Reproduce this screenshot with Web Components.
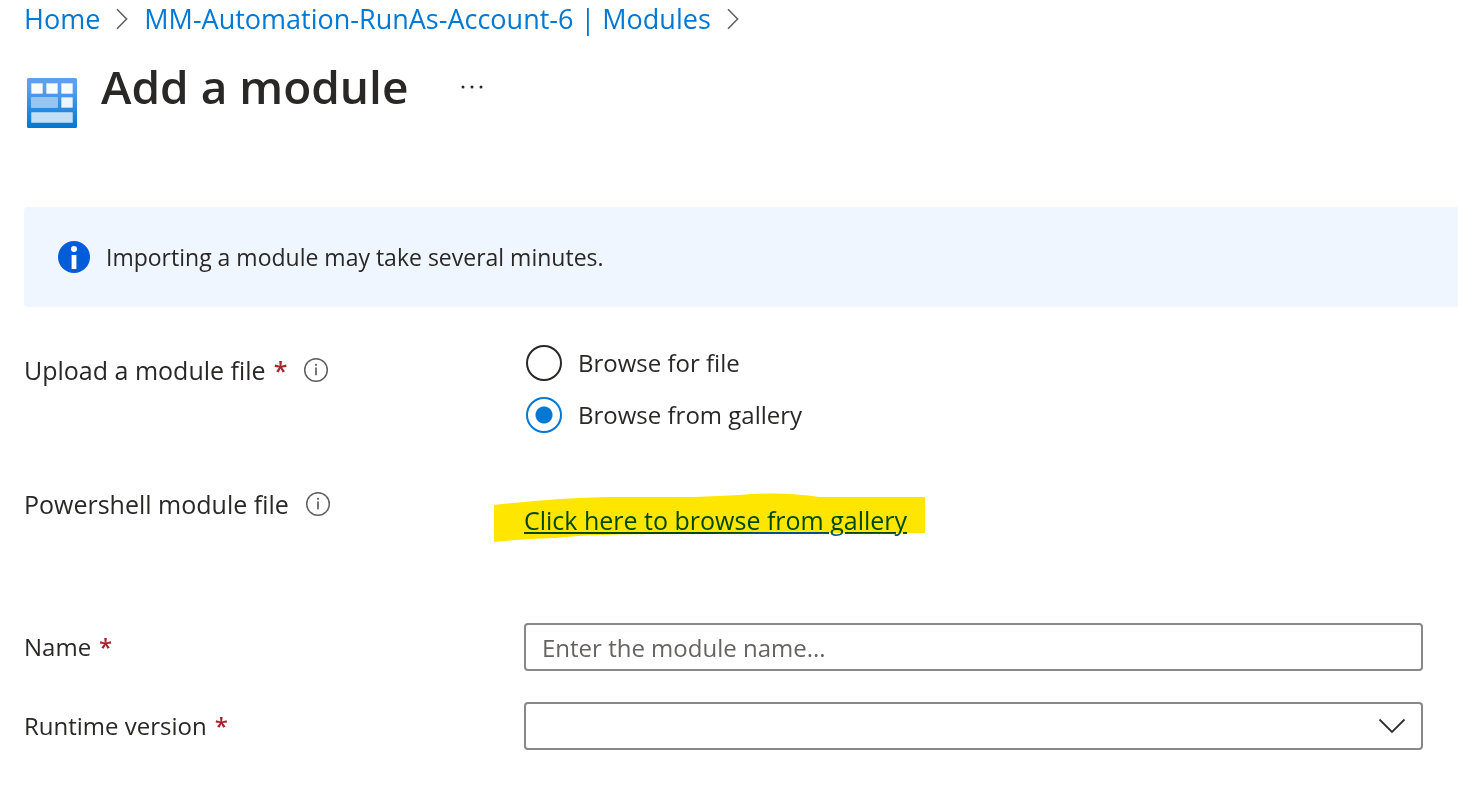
<!DOCTYPE html>
<html lang="en">
<head>
<meta charset="utf-8">
<title>Add a module</title>
<style>
  body {
    margin: 0;
    background: #fff;
    color: #292827;
    font: 25px/36px "Open Sans", "Noto Sans", sans-serif;
  }
</style>
</head>
<body>
<module-page>
  <bread-crumbs slot="nav">
    <crumb-link href="#home">Home</crumb-link>
    <crumb-link href="#modules">MM-Automation-RunAs-Account-6 | Modules</crumb-link>
  </bread-crumbs>
  <page-heading slot="heading">Add a module</page-heading>
  <info-banner slot="banner">Importing a module may take several minutes.</info-banner>
  <radio-field label="Upload a module file" options="Browse for file|Browse from gallery" selected="1"></radio-field>
  <gallery-field label="Powershell module file">Click here to browse from gallery</gallery-field>
  <text-field label="Name" placeholder="Enter the module name..."></text-field>
  <select-field label="Runtime version"></select-field>
</module-page>

<script>
const base = `
  *, *::before, *::after { box-sizing: border-box; }
  :host { display: block; }
  a { color: #0078d4; text-decoration: none; }
  svg { display: block; flex: none; }
`;

const row = `
  .row { display: grid; grid-template-columns: 500px minmax(0, 1fr); }
  .label { display: flex; align-items: center; height: 48px; }
  .req { color: #a4262c; margin-left: 8px; font-weight: 600; }
  .info { margin-left: 16px; padding: 0; border: 0; background: none; }
  input, select { font: inherit; color: inherit; margin: 0; }
`;

const box = `
  :host { font-size: 24px; }
  .box {
    display: block; width: 100%; height: 48px; padding: 0 16px;
    border: 2px solid #8a8886; border-radius: 4px; background: #fff; appearance: none;
  }
`;

const infoButton = `
  <button class="info" type="button" aria-label="More information">
    <svg width="26" height="26" viewBox="0 0 26 26" fill="none" stroke="#605e5c">
      <circle cx="13" cy="13" r="11.3" stroke-width="1.5"/>
      <path d="M13 10.6V18.3" stroke-width="1.7"/>
      <circle cx="13" cy="7.8" r="1.1" fill="#605e5c" stroke="none"/>
    </svg>
  </button>`;

function define(name, css, markup) {
  customElements.define(name, class extends HTMLElement {
    constructor() {
      super();
      this.attachShadow({ mode: "open" });
    }
    connectedCallback() {
      this.shadowRoot.innerHTML = `<style>${base}${css}</style>${markup(this)}`;
    }
  });
}

define("module-page", `
  :host { padding-left: 24px; }
  .heading { margin-top: 24px; }
  .banner { margin-top: 79px; }
  form { display: grid; padding: 32px 35px 0 0; }
`, () => `
  <nav aria-label="Breadcrumb"><slot name="nav"></slot></nav>
  <main>
    <div class="heading"><slot name="heading"></slot></div>
    <div class="banner"><slot name="banner"></slot></div>
    <form><slot></slot></form>
  </main>`);

define("bread-crumbs", `
  :host { display: flex; height: 38px; align-items: center; font-size: 27px; }
`, () => `<slot></slot>`);

define("crumb-link", `
  :host { display: flex; align-items: center; white-space: nowrap; }
  svg { margin: 0 16px; }
`, el => `
  <a href="${el.getAttribute("href")}"><slot></slot></a>
  <svg width="12" height="22" viewBox="0 0 12 22" fill="none" stroke="#605e5c" stroke-width="1.5"><path d="M1 1.3L10.6 11L1 20.7"/></svg>`);

define("page-heading", `
  :host { display: flex; align-items: flex-start; }
  .logo { margin: 16px 24px 0 3px; }
  h1 { margin: 0; font-size: 46px; line-height: 48px; font-weight: 600; }
  button { margin-left: 48px; height: 50px; padding: 0; border: 0; background: none; }
`, () => `
  <svg class="logo" width="50" height="50" viewBox="0 0 50 50">
    <defs>
      <linearGradient id="g" x1="0" y1="0" x2="0" y2="1">
        <stop offset="0" stop-color="#5ea0ef"/><stop offset=".2" stop-color="#5a9eee"/><stop offset="1" stop-color="#0078d4"/>
      </linearGradient>
    </defs>
    <rect width="50" height="50" rx="1.5" fill="url(#g)"/>
    <g stroke="#fff" stroke-opacity=".3">
      <path d="M4.5 5.5h11v10h-11zM19.5 5.5h11v10h-11zM34.5 5.5h11v10h-11z" fill="#f8fbff"/>
      <path d="M4.5 19.5h26v10h-26z" fill="#98c4f0"/>
      <path d="M34.5 19.5h11v10h-11z" fill="#ecf4fd"/>
      <path d="M4.5 34.5h41v10h-41z" fill="#c2dff6"/>
    </g>
  </svg>
  <h1><slot></slot></h1>
  <button type="button" aria-label="More actions">
    <svg width="30" height="8" viewBox="0 0 30 8" fill="#292827"><circle cx="7" cy="4" r="1.5"/><circle cx="16" cy="4" r="1.5"/><circle cx="25" cy="4" r="1.5"/></svg>
  </button>`);

define("info-banner", `
  :host {
    display: flex; align-items: center; gap: 16px; height: 100px; padding-left: 34px;
    background: #eff6ff; border-radius: 4px 0 0 4px; font-size: 23px;
  }
`, () => `
  <svg width="32" height="32" viewBox="0 0 32 32">
    <circle cx="16" cy="16" r="16" fill="#015cda"/>
    <circle cx="16" cy="8" r="3" fill="#fff"/>
    <path d="M13.6 14h4.8v14h-4.8z" fill="#fff"/>
  </svg>
  <span><slot></slot></span>`);

define("radio-field", `${row}
  :host { margin-bottom: 47px; }
  .label { height: 62px; }
  .options { display: grid; gap: 16px; padding: 6px 0 0 2px; }
  .option { display: flex; align-items: center; gap: 16px; height: 36px; font-size: 24px; }
  input {
    appearance: none; flex: none; width: 36px; height: 36px;
    border: 2px solid #292827; border-radius: 50%; background: #fff;
  }
  input:checked {
    border-color: #0078d4;
    background: radial-gradient(circle, #0078d4 8px, transparent 9px);
  }
`, el => `
  <div class="row" role="radiogroup" aria-labelledby="l">
    <div class="label"><span id="l">${el.getAttribute("label")}</span><span class="req">*</span>${infoButton}</div>
    <div class="options">
      ${el.getAttribute("options").split("|").map((text, i) => `
        <label class="option"><input type="radio" name="source"${i === +el.getAttribute("selected") ? " checked" : ""}><span>${text}</span></label>`).join("")}
    </div>
  </div>`);

define("gallery-field", `${row}
  :host { margin-bottom: 85px; }
  .target { padding-top: 22px; }
  .wrap { display: inline-block; position: relative; height: 36px; vertical-align: top; }
  a { color: #00508a; text-decoration: underline; text-decoration-thickness: 2px; text-underline-offset: 2px; }
  .marker { position: absolute; left: -30px; top: -10px; mix-blend-mode: multiply; pointer-events: none; }
`, el => `
  <div class="row">
    <div class="label"><span>${el.getAttribute("label")}</span>${infoButton}</div>
    <div class="target"><span class="wrap">
      <a href="#gallery"><slot></slot></a>
      <svg class="marker" width="431" height="50" viewBox="0 0 431 50"><path d="M0 13Q62 6 115 5H200Q225 4 245 3Q290 -1 325 5H431V41H345Q290 38 215 42H180Q95 42 62 46Q28 47 0 50Z" fill="#ffe600"/></svg>
    </span></div>
  </div>`);

define("text-field", `${row}${box}
  :host { margin-bottom: 31px; }
  input::placeholder { color: #666462; opacity: 1; }
`, el => `
  <div class="row">
    <label class="label" for="f"><span>${el.getAttribute("label")}</span><span class="req">*</span></label>
    <input class="box" id="f" type="text" placeholder="${el.getAttribute("placeholder")}">
  </div>`);

define("select-field", `${row}${box}
  .control { display: grid; align-items: center; }
  .control > * { grid-area: 1 / 1; }
  svg { justify-self: end; margin-right: 17px; pointer-events: none; }
`, el => `
  <div class="row">
    <label class="label" for="f"><span>${el.getAttribute("label")}</span><span class="req">*</span></label>
    <div class="control">
      <select class="box" id="f"><option value=""></option></select>
      <svg width="28" height="16" viewBox="0 0 28 16" fill="none" stroke="#323130" stroke-width="1.8"><path d="M1.5 1.5L14 14L26.5 1.5"/></svg>
    </div>
  </div>`);
</script>
</body>
</html>
